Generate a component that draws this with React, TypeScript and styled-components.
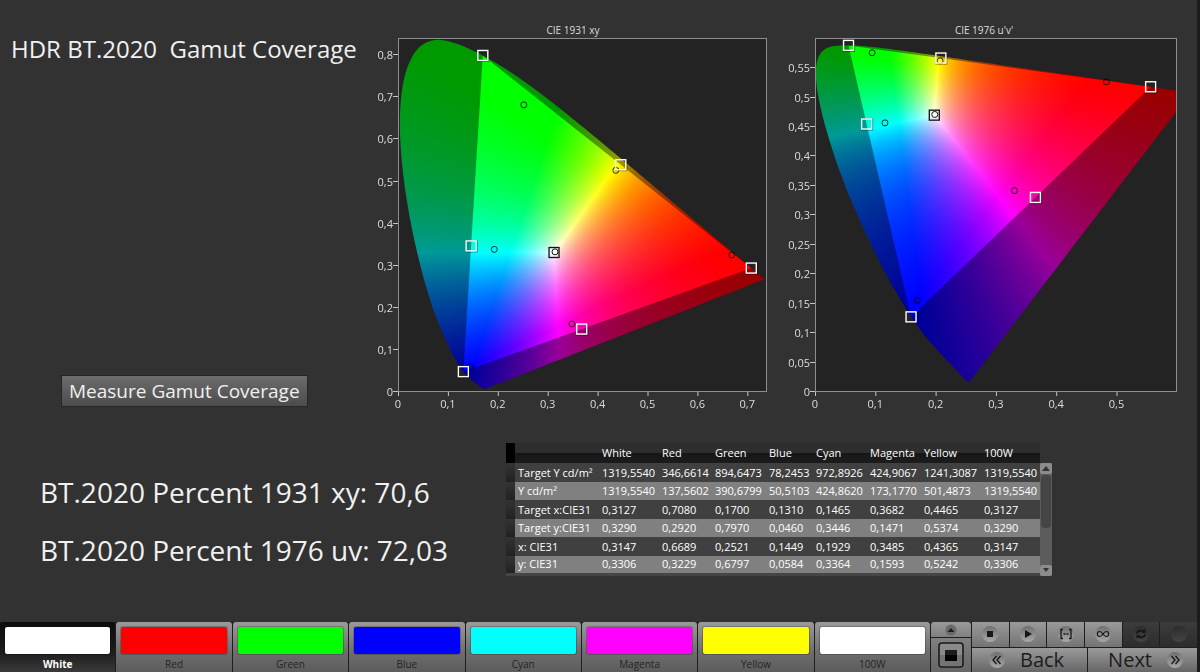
import React, { useEffect, useRef } from "react";
import styled, { createGlobalStyle, css } from "styled-components";

type Point = [number, number];

/* ---------- colour science ---------- */

const LOCUS_XY: Point[] = [
  [0.1741, 0.005], [0.1733, 0.0048], [0.1714, 0.0051], [0.1689, 0.0069], [0.1644, 0.0109],
  [0.1566, 0.0177], [0.144, 0.0297], [0.1355, 0.0399], [0.1241, 0.0578], [0.1096, 0.0868],
  [0.0913, 0.1327], [0.0687, 0.2007], [0.0454, 0.295], [0.0235, 0.4127], [0.0082, 0.5384],
  [0.0039, 0.6548], [0.0139, 0.7502], [0.0389, 0.812], [0.0743, 0.8338], [0.1142, 0.8262],
  [0.1547, 0.8059], [0.1929, 0.7816], [0.2296, 0.7543], [0.2658, 0.7243], [0.3016, 0.6923],
  [0.3373, 0.6589], [0.3731, 0.6245], [0.4087, 0.5896], [0.4441, 0.5547], [0.4788, 0.5202],
  [0.5125, 0.4866], [0.5448, 0.4544], [0.5752, 0.4242], [0.6029, 0.3965], [0.627, 0.3725],
  [0.6482, 0.3514], [0.6658, 0.334], [0.6915, 0.3083], [0.7079, 0.292], [0.719, 0.2809],
  [0.726, 0.274], [0.73, 0.27], [0.7347, 0.2653],
];

const identity = (p: Point): Point => p;

const xyToUv = ([x, y]: Point): Point => {
  const d = -2 * x + 12 * y + 3;
  return [(4 * x) / d, (9 * y) / d];
};

const uvToXy = ([u, v]: Point): Point => {
  const d = 6 * u - 16 * v + 12;
  return [(9 * u) / d, (4 * v) / d];
};

const xyToRgb = ([x, y]: Point): [number, number, number] => {
  const yy = Math.max(y, 0.0001);
  const X = x / yy;
  const Z = (1 - x - yy) / yy;
  const lin = [
    3.2406 * X - 1.5372 - 0.4986 * Z,
    -0.9689 * X + 1.8758 + 0.0415 * Z,
    0.0557 * X - 0.204 + 1.057 * Z,
  ].map((c) => Math.max(c, 0));
  const top = Math.max(...lin, 0.0001);
  return lin.map((c) => Math.round((255 * c) / top)) as [number, number, number];
};

const smooth = (pts: Point[]): Point[] => {
  const out: Point[] = [];
  for (let i = 0; i < pts.length - 1; i++) {
    const a = pts[Math.max(i - 1, 0)];
    const b = pts[i];
    const c = pts[i + 1];
    const d = pts[Math.min(i + 2, pts.length - 1)];
    for (let k = 0; k < 6; k++) {
      const t = k / 6;
      const mix = (n: 0 | 1) =>
        0.5 *
        (2 * b[n] +
          (c[n] - a[n]) * t +
          (2 * a[n] - 5 * b[n] + 4 * c[n] - d[n]) * t * t +
          (3 * b[n] - a[n] - 3 * c[n] + d[n]) * t * t * t);
      out.push([mix(0), mix(1)]);
    }
  }
  out.push(pts[pts.length - 1]);
  return out;
};

/* ---------- data ---------- */

const TARGETS: Point[] = [
  [0.708, 0.292], [0.17, 0.797], [0.131, 0.046],
  [0.1465, 0.3446], [0.3682, 0.1471], [0.4465, 0.5374],
];
const WHITE_TARGET: Point = [0.3127, 0.329];
const WHITE_MEASURED: Point = [0.3147, 0.3306];
const MEASURED: Point[] = [
  [0.6689, 0.3229], [0.2521, 0.6797], [0.1449, 0.0584],
  [0.1929, 0.3364], [0.3485, 0.1593], [0.4365, 0.5242],
];

const COLUMNS = ["White", "Red", "Green", "Blue", "Cyan", "Magenta", "Yellow", "100W"];
const WIDTHS = [60, 53, 54, 47, 54, 54, 60, 59];
const ROWS: [string, string[]][] = [
  ["Target Y cd/m²", ["1319,5540", "346,6614", "894,6473", "78,2453", "972,8926", "424,9067", "1241,3087", "1319,5540"]],
  ["Y cd/m²", ["1319,5540", "137,5602", "390,6799", "50,5103", "424,8620", "173,1770", "501,4873", "1319,5540"]],
  ["Target x:CIE31", ["0,3127", "0,7080", "0,1700", "0,1310", "0,1465", "0,3682", "0,4465", "0,3127"]],
  ["Target y:CIE31", ["0,3290", "0,2920", "0,7970", "0,0460", "0,3446", "0,1471", "0,5374", "0,3290"]],
  ["x: CIE31", ["0,3147", "0,6689", "0,2521", "0,1449", "0,1929", "0,3485", "0,4365", "0,3147"]],
  ["y: CIE31", ["0,3306", "0,3229", "0,6797", "0,0584", "0,3364", "0,1593", "0,5242", "0,3306"]],
];

const SWATCHES: [string, string][] = [
  ["White", "#ffffff"], ["Red", "#ff0000"], ["Green", "#00ff00"], ["Blue", "#0000ff"],
  ["Cyan", "#00ffff"], ["Magenta", "#ff00ff"], ["Yellow", "#ffff00"], ["100W", "#ffffff"],
];

/* ---------- styles ---------- */

const GlobalStyle = createGlobalStyle`
  *, *::before, *::after { box-sizing: border-box; }
  body { margin: 0; background: #323232; }
  button { font: inherit; color: inherit; border: 0; padding: 0; cursor: pointer; }
`;

const Page = styled.div`
  min-height: 100vh;
  display: flex;
  flex-direction: column;
  background: #323232;
  border-right: 3px solid #1c1c1c;
  color: #f0f0f0;
  font-family: "Open Sans", "Noto Sans", sans-serif;
`;

const Upper = styled.section`
  display: grid;
  grid-template-columns: minmax(0, 372fr) minmax(0, 408fr) minmax(0, 417fr);
`;

const Intro = styled.div`
  display: flex;
  flex-direction: column;
  align-items: flex-start;
  padding: 32px 0 13px 11px;
`;

const Title = styled.h1`
  margin: 0;
  font-size: 24px;
  line-height: 34px;
  font-weight: 400;
  white-space: pre;
`;

const MeasureButton = styled.button`
  height: 32px;
  margin: auto 0 0 50px;
  padding: 0 7px;
  border: 1px solid #262626;
  background: linear-gradient(#6c6c6c, #4c4c4c);
  font-size: 19px;
  line-height: 30px;
  white-space: nowrap;
`;

const ChartSvg = styled.svg`
  display: block;
  width: 100%;
  height: auto;
  font-family: "Open Sans", "Noto Sans", sans-serif;
  font-size: 11px;
  fill: #dcdcdc;
`;

const FieldCanvas = styled.canvas`
  display: block;
  width: 100%;
  height: 100%;
`;

const Lower = styled.section`
  display: grid;
  grid-template-columns: minmax(0, 506fr) minmax(0, 691fr);
  align-items: start;
  padding-top: 23px;
`;

const Results = styled.div`
  display: flex;
  flex-direction: column;
  gap: 18px;
  padding: 29px 0 0 40px;
`;

const Result = styled.p`
  margin: 0;
  font-size: 28px;
  line-height: 40px;
  white-space: nowrap;
`;

const TableArea = styled.div`
  display: flex;
  align-items: stretch;
`;

const DataTable = styled.table`
  border-collapse: collapse;
  table-layout: fixed;
  width: 534px;
  font-size: 11px;
  line-height: 16px;
  color: #fff;
  border-bottom: 3px solid #454545;

  th, td {
    padding: 0 0 0 3px;
    font-weight: 500;
    text-align: left;
    white-space: nowrap;
  }
`;

const HeadRow = styled.tr`
  height: 20px;
  background: linear-gradient(#2e2e2e 50%, #161616 50%, #1c1c1c);
`;

const Corner = styled.td`
  background: #000;
`;

const BodyRow = styled.tr<{ $light: boolean }>`
  height: ${(p) => (p.$light ? 18 : 19)}px;
  background: ${(p) => (p.$light ? "#808080" : "#404040")};
`;

const RowHandle = styled.td`
  background: linear-gradient(#333, #222);
`;

const Scroller = styled.div`
  width: 12px;
  margin-top: 20px;
  display: flex;
  flex-direction: column;
  background: #5c5c5c;
`;

const ScrollButton = styled.button`
  height: 11px;
  display: grid;
  place-items: center;
  border-radius: 2px;
  background: #8c8c8c;
`;

const ScrollThumb = styled.div`
  height: 53px;
  margin: 1px 1px auto;
  border-radius: 4px;
  background: #454545;
`;

const BottomBar = styled.footer`
  display: flex;
  gap: 1px;
  height: 50px;
  margin-top: auto;
  background: #1e1e1e;
`;

const SwatchButton = styled.button<{ $active: boolean }>`
  flex: 1 1 0;
  min-width: 0;
  display: flex;
  flex-direction: column;
  padding: 4px 4px 0;
  border-radius: 3px 3px 0 0;
  font-size: 10px;
  line-height: 15px;
  background: linear-gradient(#9a9a9a, #6e6e6e 60%, #5c5c5c);
  color: #242424;
  font-weight: 500;
  ${(p) =>
    p.$active &&
    css`
      background: linear-gradient(#0c0c0c, #1c1c1c 60%, #3a3a3a);
      color: #fff;
      font-weight: 700;
    `}
`;

const SwatchColor = styled.span<{ $color: string }>`
  height: 31px;
  margin-bottom: 2px;
  border-radius: 3px;
  border: 1px solid rgba(0, 0, 0, 0.2);
  background: ${(p) => p.$color};
  background-clip: padding-box;
`;

const PatternColumn = styled.div`
  width: 40px;
  display: flex;
  flex-direction: column;
  gap: 1px;
`;

const ExpandButton = styled.button`
  height: 15px;
  display: grid;
  place-items: center;
  border-radius: 3px 3px 0 0;
  background: linear-gradient(#9a9a9a, #808080);
`;

const PatternButton = styled.button`
  flex: 1;
  display: grid;
  place-items: center;
  background: linear-gradient(#808080, #666);
`;

const Controls = styled.div`
  width: 225px;
  display: flex;
  flex-direction: column;
  gap: 1px;
`;

const ControlRow = styled.div`
  flex: 1 1 0;
  display: flex;
  gap: 1px;
`;

const RoundButton = styled.button<{ $dim?: boolean }>`
  flex: 1 1 0;
  display: grid;
  place-items: center;
  background: ${(p) =>
    p.$dim ? "linear-gradient(#3c3c3c, #2c2c2c)" : "linear-gradient(#999, #747474)"};
`;

const NavButton = styled.button<{ $forward?: boolean }>`
  flex: 1 1 0;
  display: flex;
  align-items: center;
  justify-content: ${(p) => (p.$forward ? "flex-end" : "flex-start")};
  gap: 14px;
  padding: 0 ${(p) => (p.$forward ? 13 : 16)}px;
  background: linear-gradient(#9a9a9a, #666);
  color: #1c1c1c;
  font-size: 20px;
  line-height: 24px;
  font-weight: 500;
`;

/* ---------- chromaticity charts ---------- */

interface Projection {
  scaleX: number;
  scaleY: number;
  fromXy: (p: Point) => Point;
  toXy: (p: Point) => Point;
}

interface ChartProps extends Projection {
  title: string;
  titleX: number;
  width: number;
  left: number;
  right: number;
  xTicks: number[];
  yTicks: number[];
}

const TOP = 38;
const BOTTOM = 392;

const label = (n: number) => String(Number(n.toFixed(2))).replace(".", ",");

function GamutField({ width, height, scaleX, scaleY, fromXy, toXy }: Projection & { width: number; height: number }) {
  const ref = useRef<HTMLCanvasElement>(null);

  useEffect(() => {
    const ctx = ref.current?.getContext("2d");
    if (!ctx) return;
    const image = ctx.createImageData(width, height);
    for (let row = 0; row < height; row++) {
      for (let col = 0; col < width; col++) {
        const rgb = xyToRgb(toXy([(col + 0.5) / scaleX, (height - row - 1.5) / scaleY]));
        image.data.set([...rgb, 255], (row * width + col) * 4);
      }
    }
    ctx.globalCompositeOperation = "source-over";
    ctx.putImageData(image, 0, 0);

    const trace = (points: Point[]) => {
      points.forEach((p, i) => {
        const [a, b] = fromXy(p);
        const x = a * scaleX;
        const y = height - 1 - b * scaleY;
        if (i === 0) ctx.moveTo(x, y);
        else ctx.lineTo(x, y);
      });
      ctx.closePath();
    };

    ctx.beginPath();
    ctx.rect(0, 0, width, height);
    trace(TARGETS.slice(0, 3));
    ctx.fillStyle = "rgba(0, 0, 0, 0.4)";
    ctx.fill("evenodd");

    ctx.globalCompositeOperation = "destination-in";
    ctx.beginPath();
    trace(smooth(LOCUS_XY));
    ctx.fillStyle = "#000";
    ctx.fill();
  }, [width, height, scaleX, scaleY, fromXy, toXy]);

  return <FieldCanvas ref={ref} width={width} height={height} />;
}

function ChromaticityChart(p: ChartProps) {
  const place = (pt: Point): Point => {
    const [a, b] = p.fromXy(pt);
    return [p.left + a * p.scaleX, BOTTOM - 1 - b * p.scaleY];
  };
  const [wx, wy] = place(WHITE_TARGET);
  const [mx, my] = place(WHITE_MEASURED);

  return (
    <ChartSvg viewBox={`0 0 ${p.width} 420`} role="img" aria-label={p.title}>
      <text x={p.titleX} y={34} textAnchor="middle" fontSize={10}>{p.title}</text>
      <rect x={p.left} y={TOP} width={p.right - p.left} height={BOTTOM - TOP} fill="#232323" />
      <foreignObject x={p.left} y={TOP} width={p.right - p.left} height={BOTTOM - TOP}>
        <GamutField
          width={p.right - p.left}
          height={BOTTOM - TOP}
          scaleX={p.scaleX}
          scaleY={p.scaleY}
          fromXy={p.fromXy}
          toXy={p.toXy}
        />
      </foreignObject>
      <rect x={p.left + 0.5} y={TOP + 0.5} width={p.right - p.left - 1} height={BOTTOM - TOP - 1} fill="none" stroke="#8e8e8e" />
      {p.xTicks.map((t) => (
        <g key={t}>
          <path d={`M${p.left + t * p.scaleX + 0.5} ${BOTTOM}v4`} stroke="#c4c4c4" />
          <text x={p.left + t * p.scaleX} y={408} textAnchor="middle">{label(t)}</text>
        </g>
      ))}
      {p.yTicks.map((t) => (
        <g key={t}>
          <path d={`M${p.left - 5} ${Math.round(BOTTOM - t * p.scaleY) - 0.5}h5`} stroke="#c4c4c4" />
          <text x={p.left - 5} y={BOTTOM - t * p.scaleY + 4} textAnchor="end">{label(t)}</text>
        </g>
      ))}
      {MEASURED.map((m, i) => {
        const [x, y] = place(m);
        return <circle key={i} cx={x} cy={y} r={3} fill="none" stroke="#000" strokeOpacity={0.8} />;
      })}
      {TARGETS.map((m, i) => {
        const [x, y] = place(m);
        return (
          <g key={i} fill="none">
            <rect x={x - 5} y={y - 5} width={11} height={11} stroke="#000" strokeOpacity={0.5} />
            <rect x={x - 5} y={y - 5} width={10} height={10} stroke="#fff" strokeWidth={1.4} />
          </g>
        );
      })}
      <rect x={wx - 4} y={wy - 4} width={9} height={9} fill="none" stroke="#eee" />
      <rect x={wx - 5} y={wy - 5} width={10} height={10} fill="none" stroke="#111" strokeWidth={1.3} />
      <circle cx={mx} cy={my} r={3} fill="#fff" stroke="#111" />
    </ChartSvg>
  );
}

/* ---------- icons ---------- */

function RoundIcon({ dim, children }: { dim?: boolean; children?: React.ReactNode }) {
  return (
    <svg width="18" height="18" viewBox="0 0 18 18" aria-hidden="true">
      <defs>
        <linearGradient id={dim ? "knobDim" : "knob"} x1="0" y1="0" x2="0" y2="1">
          <stop offset="0" stopColor={dim ? "#2c2c2c" : "#707070"} />
          <stop offset="1" stopColor={dim ? "#444" : "#a8a8a8"} />
        </linearGradient>
      </defs>
      <circle cx="9" cy="9" r="8" fill={`url(#${dim ? "knobDim" : "knob"})`} />
      {children}
    </svg>
  );
}

const stroke = { fill: "none", stroke: "#161616", strokeWidth: 1.3 };

export default function App() {
  return (
    <>
      <GlobalStyle />
      <Page>
        <Upper>
          <Intro>
            <Title>{"HDR BT.2020  Gamut Coverage"}</Title>
            <MeasureButton type="button">Measure Gamut Coverage</MeasureButton>
          </Intro>
          <ChromaticityChart
            title="CIE 1931 xy"
            titleX={201}
            width={408}
            left={26}
            right={395}
            scaleX={499}
            scaleY={421}
            xTicks={[0, 0.1, 0.2, 0.3, 0.4, 0.5, 0.6, 0.7]}
            yTicks={[0, 0.1, 0.2, 0.3, 0.4, 0.5, 0.6, 0.7, 0.8]}
            fromXy={identity}
            toXy={identity}
          />
          <ChromaticityChart
            title="CIE 1976 u'v'"
            titleX={204}
            width={417}
            left={35}
            right={397}
            scaleX={603}
            scaleY={589}
            xTicks={[0, 0.1, 0.2, 0.3, 0.4, 0.5]}
            yTicks={[0, 0.05, 0.1, 0.15, 0.2, 0.25, 0.3, 0.35, 0.4, 0.45, 0.5, 0.55]}
            fromXy={xyToUv}
            toXy={uvToXy}
          />
        </Upper>

        <Lower>
          <Results>
            <Result>BT.2020 Percent 1931 xy: 70,6</Result>
            <Result>BT.2020 Percent 1976 uv: 72,03</Result>
          </Results>
          <TableArea>
            <DataTable>
              <colgroup>
                <col style={{ width: 9 }} />
                <col style={{ width: 84 }} />
                {WIDTHS.map((w, i) => (
                  <col key={i} style={{ width: w }} />
                ))}
              </colgroup>
              <thead>
                <HeadRow>
                  <Corner />
                  <td />
                  {COLUMNS.map((c) => (
                    <th key={c} scope="col">{c}</th>
                  ))}
                </HeadRow>
              </thead>
              <tbody>
                {ROWS.map(([name, values], r) => (
                  <BodyRow key={name} $light={r % 2 === 1}>
                    <RowHandle />
                    <th scope="row">{name}</th>
                    {values.map((v, i) => (
                      <td key={i}>{v}</td>
                    ))}
                  </BodyRow>
                ))}
              </tbody>
            </DataTable>
            <Scroller>
              <ScrollButton type="button" aria-label="Scroll up">
                <svg width="8" height="5" viewBox="0 0 8 5"><path d="M0 5 4 0l4 5z" fill="#333" /></svg>
              </ScrollButton>
              <ScrollThumb />
              <ScrollButton type="button" aria-label="Scroll down">
                <svg width="8" height="5" viewBox="0 0 8 5"><path d="M1 0h6L4 4z" fill="#333" /></svg>
              </ScrollButton>
            </Scroller>
          </TableArea>
        </Lower>

        <BottomBar>
          {SWATCHES.map(([name, color], i) => (
            <SwatchButton key={name} type="button" $active={i === 0} aria-pressed={i === 0}>
              <SwatchColor $color={color} />
              {name}
            </SwatchButton>
          ))}
          <PatternColumn>
            <ExpandButton type="button" aria-label="Expand">
              <svg width="12" height="12" viewBox="0 0 12 12">
                <circle cx="6" cy="6" r="5.5" fill="#6a6a6a" />
                <path d="M2.500 8 6 4l3.500 4z" fill="#1c1c1c" />
              </svg>
            </ExpandButton>
            <PatternButton type="button" aria-label="Pattern window">
              <svg width="26" height="26" viewBox="0 0 26 26">
                <rect x="1" y="1" width="24" height="24" rx="3" fill="#8a8a8a" stroke="#1a1a1a" strokeWidth="1.6" />
                <path d="M2 13h22v10a1 1 0 0 1-1 1H3a1 1 0 0 1-1-1z" fill="#747474" />
                <rect x="7" y="8" width="12" height="11" fill="#000" />
                <rect x="7" y="8" width="12" height="5" fill="#1c1c1c" />
              </svg>
            </PatternButton>
          </PatternColumn>
          <Controls>
            <ControlRow>
              <RoundButton type="button" aria-label="Stop">
                <RoundIcon><rect x="6" y="6" width="6" height="6" fill="#161616" /></RoundIcon>
              </RoundButton>
              <RoundButton type="button" aria-label="Play">
                <RoundIcon><path d="M6 5v8l7-4z" fill="#161616" /></RoundIcon>
              </RoundButton>
              <RoundButton type="button" aria-label="Measure series">
                <RoundIcon>
                  <path d="M6 4.500H4v9h2M12 4.500h2v9h-2" {...stroke} />
                  <path d="M6.500 9h2M9.500 9h2" {...stroke} />
                </RoundIcon>
              </RoundButton>
              <RoundButton type="button" aria-label="Continuous">
                <RoundIcon>
                  <path d="M9 9C7.500 6.800 6.600 6.500 5.800 6.500a2.500 2.500 0 0 0 0 5C6.600 11.500 7.500 11.200 9 9s2.400-2.500 3.200-2.500a2.500 2.500 0 0 1 0 5C11.400 11.500 10.500 11.200 9 9z" {...stroke} strokeWidth={1.1} />
                </RoundIcon>
              </RoundButton>
              <RoundButton type="button" $dim aria-label="Refresh">
                <RoundIcon dim>
                  <path d="M5 8.500C5 6 9 4.500 12 6.500M13 9.500c0 2.500-4 4-7 2" {...stroke} strokeWidth={1.8} />
                  <path d="M13.500 4v4H9.800zM4.500 14v-4h3.700z" fill="#161616" />
                </RoundIcon>
              </RoundButton>
              <RoundButton type="button" $dim aria-label="Record">
                <RoundIcon dim />
              </RoundButton>
            </ControlRow>
            <ControlRow>
              <NavButton type="button">
                <RoundIcon><path d="M8.500 5 5 9l3.500 4M12.500 5 9 9l3.500 4" {...stroke} /></RoundIcon>
                Back
              </NavButton>
              <NavButton type="button" $forward>
                Next
                <RoundIcon><path d="M5.500 5 9 9l-3.500 4M9.500 5 13 9l-3.500 4" {...stroke} /></RoundIcon>
              </NavButton>
            </ControlRow>
          </Controls>
        </BottomBar>
      </Page>
    </>
  );
}
